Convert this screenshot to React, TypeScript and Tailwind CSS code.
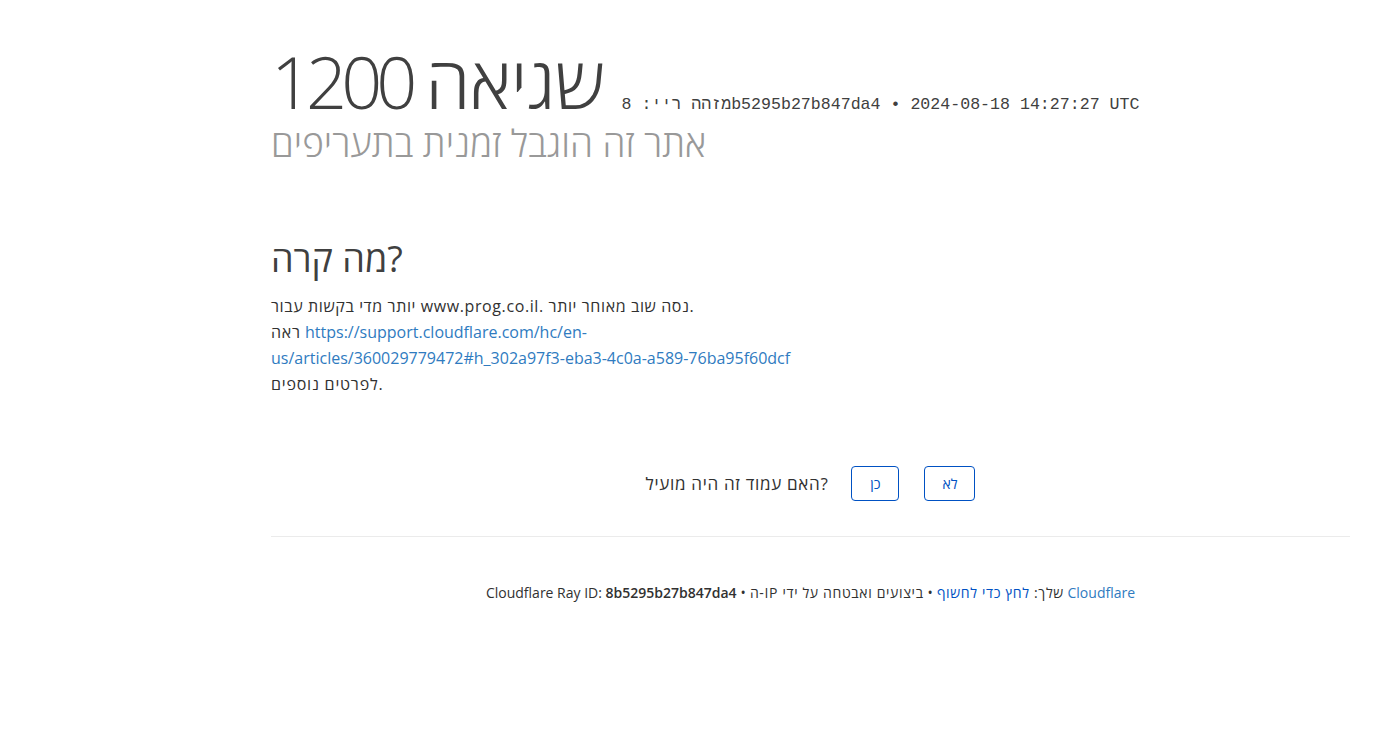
import React from "react";

export default function App() {
  const sans = { fontFamily: '"Open Sans", "Noto Sans", sans-serif' } as React.CSSProperties;
  return (
    <div className="min-h-[735px] w-full bg-white text-[#404040]" style={sans}>
      <div className="pl-[271px] pr-[36px] pt-[41px]">
        <header>
          <h1 className="flex items-baseline text-[72px] leading-[80px] font-light text-[#404040]">
            <span className="tracking-[-6px]">1200</span>
            <span className="ml-[14px]">שגיאה</span>
            <span className="ml-[17px] text-[16.6px] leading-[20px] font-normal text-[#404040] whitespace-nowrap [font-family:'Liberation_Mono',monospace]">
              מזהה ריי: 8b5295b27b847da4 • 2024-08-18 14:27:27 UTC
            </span>
          </h1>
          <h2 className="text-[37px] leading-[44px] font-light text-[#999999]">אתר זה הוגבל זמנית בתעריפים</h2>
        </header>

        <section className="mt-[72px] w-[530px]">
          <h2 className="text-[36px] leading-[44px] font-normal text-[#404040]">מה קרה?</h2>
          <p className="mt-[12px] text-[16px] leading-[26px] text-[#313131]">
            <span className="tracking-[0.6px]">יותר מדי בקשות עבור www.prog.co.il. נסה שוב מאוחר יותר.</span>
            <br />
            <span className="tracking-[0.8px]">ראה</span>{" "}
            <a className="text-[#2f7bbf]">https://support.cloudflare.com/hc/en-us/articles/360029779472#h_302a97f3-eba3-4c0a-a589-76ba95f60dcf</a>{" "}
            <span className="tracking-[0.8px]">לפרטים נוספים.</span>
          </p>
        </section>

        <div className="mt-[69px] flex items-center justify-center">
          <span className="text-[17px] tracking-[0.7px] text-[#313131]">האם עמוד זה היה מועיל?</span>
          <div className="ml-[23px] flex gap-[25px]">
            <button className="h-[35px] w-[48px] rounded-[4px] border border-[#0051c3] text-[14px] text-[#0051c3]">כן</button>
            <button className="h-[35px] w-[51px] rounded-[4px] border border-[#0051c3] text-[14px] text-[#0051c3]">לא</button>
          </div>
        </div>

        <div className="mt-[35px] border-t border-[#ebebeb]" />

        <div className="mt-[46px] text-center text-[14px] leading-[20px] text-[#313131]">
          <span>Cloudflare Ray ID: <strong className="font-semibold">8b5295b27b847da4</strong></span>
          <span className="mx-[4px]">•</span>
          <span className="tracking-[0.65px]">
            ה-IP שלך: <button className="text-[#0051c3] tracking-[0.65px]">לחץ כדי לחשוף</button>
          </span>
          <span className="mx-[4px]">•</span>
          <span>
            <span className="tracking-[0.65px]">ביצועים ואבטחה על ידי</span> <a className="text-[#2f7bbf]">Cloudflare</a>
          </span>
        </div>
      </div>
    </div>
  );
}
